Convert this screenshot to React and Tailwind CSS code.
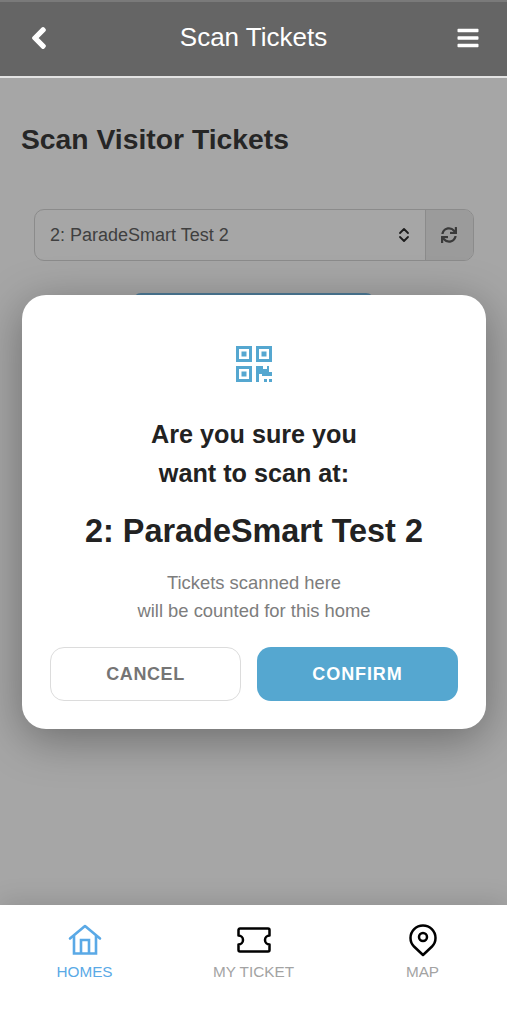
import { FaBars, FaChevronLeft, FaSync } from "react-icons/fa";

function QrIcon() {
  return (
    <svg width="36" height="36" viewBox="0 0 36 36" fill="#55a7d0">
      <path fillRule="evenodd" d="M0 0h16v16H0zM3 3v10h10V3zM5.500 5.500h5v5h-5z" />
      <path fillRule="evenodd" d="M20 0h16v16H20zM23 3v10h10V3zM25.500 5.500h5v5h-5z" />
      <path fillRule="evenodd" d="M0 20h16v16H0zM3 23v10h10V23zM5.500 25.500h5v5h-5z" />
      <path d="M20 20h7v3h4v-3h2v6h3v4h-10v-2h-3v8h-3z" />
      <path d="M28 33h3v3h-3zM33 33h3v3h-3z" />
    </svg>
  );
}

function HomeIcon() {
  return (
    <svg width="34" height="32" viewBox="0 0 34 32" fill="none" stroke="#5aa9e6" strokeWidth="2.600">
      <path d="M2 14.500 17 2l15 12.500" strokeLinejoin="round" strokeLinecap="round" />
      <path d="M6 12v17.500h22V12" />
      <path d="M13 29.500V16h8v13.500" />
    </svg>
  );
}

function TicketIcon() {
  return (
    <svg width="34" height="26" viewBox="0 0 34 26" fill="none" stroke="#000" strokeWidth="2.500" strokeLinejoin="round">
      <path d="M3 1.500h28a1.500 1.500 0 0 1 1.500 1.500v5.500a4.500 4.500 0 0 0 0 9V23a1.500 1.500 0 0 1-1.500 1.500H3A1.500 1.500 0 0 1 1.500 23v-5.500a4.500 4.500 0 0 0 0-9V3A1.500 1.500 0 0 1 3 1.500z" />
    </svg>
  );
}

function PinIcon() {
  return (
    <svg width="28" height="33" viewBox="0 0 28 33" fill="none" stroke="#000" strokeWidth="2.500">
      <path d="M14 31 5 22.500C2.800 20.300 1.500 17.500 1.500 14a12.500 12.500 0 0 1 25 0c0 3.500-1.300 6.300-3.500 8.500z" strokeLinejoin="round" />
      <circle cx="14" cy="13" r="4" />
    </svg>
  );
}

function UpDownIcon() {
  return (
    <svg width="12" height="16" viewBox="0 0 12 16" fill="none" stroke="#1c1c1c" strokeWidth="1.800" strokeLinecap="round" strokeLinejoin="round">
      <path d="M2 6 6 2l4 4M2 10l4 4 4-4" />
    </svg>
  );
}

function TabItem({ icon, label, active }) {
  return (
    <div className="flex flex-col items-center w-[169px]">
      <div className="h-[36px] flex items-center justify-center">{icon}</div>
      <span className={`text-[15.300px] leading-[18px] mt-[5px] ${active ? "text-[#5aa9e6]" : "text-[#a3a3a3]"}`}>
        {label}
      </span>
    </div>
  );
}

export default function App() {
  return (
    <div className="relative w-[507px] h-[1024px] flex flex-col overflow-hidden bg-white font-['Liberation_Sans',Arial,sans-serif]">
      <header className="h-[78px] shrink-0 flex items-center justify-between pl-[27px] pr-[27px] pb-[3px] bg-[#656565] border-t-2 border-t-[#7a7a7a] border-b-2 border-b-[#e3e3e3] text-white">
        <FaChevronLeft size={24} stroke="currentColor" strokeWidth={30} />
        <h1 className="text-[26px] font-normal">Scan Tickets</h1>
        <FaBars size={24} />
      </header>

      <main className="flex-1 bg-[#a6a6a6] px-[21px] pt-[43px]">
        <h2 className="text-[28.300px] leading-[36px] font-bold text-[#262626]">Scan Visitor Tickets</h2>
        <div className="ml-[13px] mr-[12px] mt-[52px] h-[52px] flex rounded-[10px] border border-[#8b8b8b] overflow-hidden">
          <div className="flex-1 flex items-center justify-between pl-[15px] pr-[15px] text-[#3f3f3f] text-[18px]">
            <span className="mt-[1px]">2: ParadeSmart Test 2</span>
            <UpDownIcon />
          </div>
          <div className="w-[48px] flex items-center justify-center pr-[2px] bg-[#9b9b9b] border-l border-[#8b8b8b] text-[#3a3a3a]">
            <FaSync size={16} />
          </div>
        </div>
        <div className="mt-[32px] mx-auto w-[241px] h-[40px] rounded-[8px] bg-[#4e7c99]" />
      </main>

      <nav className="relative h-[119px] shrink-0 flex justify-center pt-[17px] bg-white shadow-[0_-4px_24px_rgba(0,0,0,0.12)]">
        <TabItem icon={<HomeIcon />} label="HOMES" active />
        <TabItem icon={<TicketIcon />} label="MY TICKET" />
        <TabItem icon={<PinIcon />} label="MAP" />
      </nav>

      {/* confirm dialog sits over the page */}
      <div className="absolute left-[22px] top-[295px] w-[464px] h-[434px] bg-white rounded-[24px] shadow-[0_10px_45px_rgba(0,0,0,0.35)] flex flex-col items-center pt-[51px] px-[28px]">
        <QrIcon />
        <p className="mt-[33px] text-[25.200px] leading-[39px] font-bold text-[#222] text-center">
          Are you sure you
          <br />
          want to scan at:
        </p>
        <p className="mt-[19px] text-[32.400px] leading-[38px] font-bold text-[#222]">2: ParadeSmart Test 2</p>
        <p className="mt-[19px] text-[18.400px] leading-[28px] text-[#7d7d7d] text-center">
          Tickets scanned here
          <br />
          will be counted for this home
        </p>
        <div className="mt-[22px] w-full flex gap-[16px]">
          <button className="w-[191px] h-[54px] rounded-[14px] border border-[#dcdcdc] bg-white text-[#757575] text-[18px] font-bold tracking-[0.6px]">
            CANCEL
          </button>
          <button className="flex-1 h-[54px] rounded-[14px] bg-[#55a7d0] text-white text-[18px] font-bold tracking-[0.9px]">
            CONFIRM
          </button>
        </div>
      </div>
    </div>
  );
}
